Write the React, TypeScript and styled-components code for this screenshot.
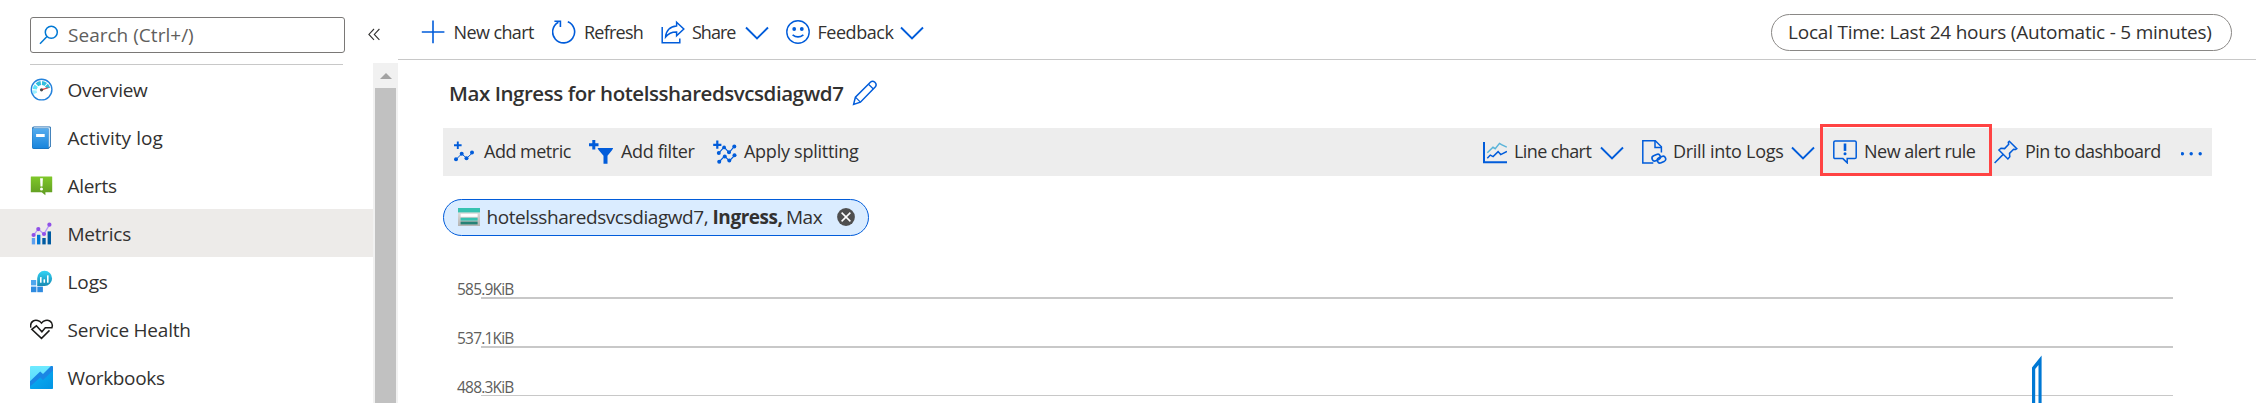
import React from 'react';
import styled, { createGlobalStyle } from 'styled-components';

const BLUE = '#015cda';

const GlobalStyle = createGlobalStyle`
  *, *::before, *::after { box-sizing: border-box; }
  html, body { margin: 0; padding: 0; background: #fff; overflow: hidden; }
  body { font-family: "Open Sans", "Noto Sans", sans-serif; color: #323130; }
  svg { display: block; flex: none; }
`;

const Page = styled.div`
  display: flex;
  width: 2256px;
  height: 403px;
  overflow: hidden;
  background: #fff;
`;

/* ---------- sidebar ---------- */

const Sidebar = styled.aside`
  width: 398px;
  flex: none;
  display: flex;
  flex-direction: column;
`;

const SearchRow = styled.div`
  height: 63px;
  flex: none;
  display: flex;
  align-items: flex-start;
  padding: 17px 0 0 30px;
`;

const SearchBox = styled.div`
  width: 315px;
  height: 36px;
  border: 1px solid #7a7876;
  border-radius: 3px;
  display: flex;
  align-items: center;
  padding: 0 0 1px 8px;
  gap: 9px;
`;

const CollapseButton = styled.div`
  margin: 11px 0 0 23px;
`;

const SidebarBody = styled.div`
  flex: 1;
  display: flex;
`;

const Menu = styled.nav`
  width: 373px;
  padding-top: 1px;
`;

const MenuDivider = styled.div`
  width: 313px;
  height: 1px;
  margin-left: 30px;
  background: #c8c8c8;
`;

const MenuItem = styled.div<{ $active?: boolean }>`
  height: 48px;
  display: flex;
  align-items: center;
  gap: 13.5px;
  padding: 2px 0 0 30px;
  background: ${p => (p.$active ? '#edebe9' : 'transparent')};
`;

const Scrollbar = styled.div`
  width: 25px;
  background: #f1f1f1;
  display: flex;
  flex-direction: column;
  align-items: center;
`;

const ScrollArrow = styled.div`
  height: 25px;
  padding-top: 10px;
`;

const ScrollThumb = styled.div`
  width: 21px;
  flex: 1;
  background: #c1c1c1;
`;

/* ---------- text ---------- */

const Text = styled.span<{ $size?: number; $track?: number; $width?: number; $weight?: number; $color?: string }>`
  flex: none;
  font-size: ${p => p.$size ?? 18}px;
  font-weight: ${p => p.$weight ?? 400};
  letter-spacing: ${p => p.$track ?? 0}px;
  line-height: 24px;
  white-space: nowrap;
  color: ${p => p.$color ?? 'inherit'};
  ${p => (p.$width ? `width: ${p.$width}px;` : '')}
`;

/* ---------- main ---------- */

const Main = styled.main`
  width: 1858px;
  display: flex;
  flex-direction: column;
`;

const TopBar = styled.header`
  height: 60px;
  flex: none;
  border-bottom: 1px solid #c8c8c8;
  display: flex;
  align-items: center;
  padding: 5px 24px 0 23px;
`;

const Command = styled.div<{ $slot?: number; $gap?: number }>`
  flex: none;
  height: 48px;
  display: flex;
  align-items: center;
  width: ${p => (p.$slot ? `${p.$slot}px` : 'auto')};
  & > svg:first-child { margin-right: ${p => p.$gap ?? 8}px; }
`;

const ToolbarCommand = styled(Command)`
  & > span { padding-bottom: 2px; }
`;

const Highlighted = styled(ToolbarCommand)`
  position: relative;
  &::after {
    content: '';
    position: absolute;
    left: -13px;
    top: -4px;
    width: 172px;
    height: 52px;
    border: 3px solid #ff4343;
  }
`;

const Spacer = styled.div`
  flex: 1;
`;

const TimePill = styled.div`
  width: 461px;
  height: 37px;
  border: 1px solid #8a8886;
  border-radius: 19px;
  display: flex;
  align-items: center;
  padding: 0 0 1px 16px;
`;

const TitleRow = styled.div`
  height: 68px;
  flex: none;
  display: flex;
  align-items: center;
  gap: 9px;
  padding: 0 0 3px 51px;
`;

const ChartToolbar = styled.div`
  width: 1769px;
  height: 48px;
  flex: none;
  margin-left: 45px;
  background: #ededed;
  display: flex;
  align-items: center;
  padding-left: 11px;
`;

const Chip = styled.div`
  width: 426px;
  height: 37px;
  flex: none;
  margin: 23px 0 0 45px;
  border: 1px solid ${BLUE};
  border-radius: 19px;
  background: #daecff;
  display: flex;
  align-items: center;
  padding: 0 0 1px 14px;
`;

const ChipResource = styled(Text)`
  margin-left: 6.5px;
`;

const Chart = styled.div`
  flex: 1;
  margin: 42px 0 0 59px;
  display: flex;
`;

const AxisLabels = styled.div`
  width: 24px;
  flex: none;
  padding-top: 1px;
`;

const AxisLabel = styled.div`
  height: 49px;
  font-size: 15.5px;
  line-height: 20px;
  letter-spacing: -0.8px;
  color: #605e5c;
  white-space: nowrap;
`;

/* ---------- icons ---------- */

const Chevron = () => (
  <svg width="24" height="24" viewBox="0 0 24 24" fill="none" stroke={BLUE} strokeWidth="1.9">
    <path d="M1 7.5 12 18.5 23 7.5" />
  </svg>
);

const SearchIcon = () => (
  <svg width="20" height="20" viewBox="0 0 20 20" fill="none" stroke="#0078d4" strokeWidth="1.5">
    <circle cx="12.3" cy="7.2" r="6" />
    <path d="M8 11.5 1 18.7" />
  </svg>
);

const CollapseIcon = () => (
  <svg width="12" height="13" viewBox="0 0 12 13" fill="none" stroke="#323130" strokeWidth="1.1">
    <path d="M6 1 .9 6.4 6 11.8M11.4 1 6.3 6.4l5.1 5.4" />
  </svg>
);

const OverviewIcon = () => (
  <svg width="24" height="24" viewBox="0 0 24 24">
    <circle cx="11.6" cy="11.6" r="10.3" fill="#fff" stroke="#2482dc" strokeWidth="1.4" />
    <g fill="none" strokeWidth="4">
      <path d="M5.2 15.4A7 7 0 0 1 4.7 12.4" stroke="#9bf0ff" />
      <path d="M4.9 11.2A7 7 0 0 1 6.2 7.8" stroke="#5ee4fb" />
      <path d="M7 6.9A7 7 0 0 1 10.8 5" stroke="#32bedd" />
      <path d="M12 4.9A7 7 0 0 1 15.7 6.5" stroke="#32bedd" />
      <path d="M16.4 7.2A7 7 0 0 1 18.2 10.3" stroke="#32bedd" />
    </g>
    <path d="m11.6 11 6.6-1.8.3.9-6.4 2.3z" fill="#e8403f" />
    <circle cx="11.5" cy="11.8" r="1.6" fill="#4a4a4a" />
  </svg>
);

const ActivityIcon = () => (
  <svg width="24" height="24" viewBox="0 0 24 24">
    <defs>
      <linearGradient id="book" x1="0" y1="0" x2="0" y2="1">
        <stop offset="0" stopColor="#55acee" />
        <stop offset="1" stopColor="#1784dc" />
      </linearGradient>
    </defs>
    <path d="M4 .4h15.6q1.2 0 1.2 1.2v19L18.5 23H3.8Q2 23 2 21V2.4Q2 .4 4 .4z" fill="#1665ab" />
    <path d="M4.2 1.2h15q.8 0 .8.8v18.3l-1.5 1.4V2.5H3.2Q3.4 1.2 4.2 1.2z" fill="#d3e8f7" />
    <path d="M2.3 2.6h16.1V22.6H3.8q-1.5 0-1.5-1.6z" fill="url(#book)" />
    <rect x="6.1" y="8" width="8.6" height="3" fill="#fff" />
  </svg>
);

const AlertsIcon = () => (
  <svg width="24" height="24" viewBox="0 0 24 24">
    <defs>
      <linearGradient id="alert" x1="0" y1="0" x2="0" y2="1">
        <stop offset="0" stopColor="#7fc829" />
        <stop offset="1" stopColor="#5f9a22" />
      </linearGradient>
    </defs>
    <path d="M1.2 2.4h20.6q.4 0 .4.4v15.1q0 .4-.4.4H15.4v3l-3.7-3H1.2q-.4 0-.4-.4V2.8q0-.4.4-.4z" fill="url(#alert)" />
    <path d="M10.1 4.3h2.8l-.4 8.2h-2z" fill="#fff" />
    <circle cx="11.5" cy="14.9" r="1.5" fill="#fff" />
  </svg>
);

const MetricsIcon = () => (
  <svg width="24" height="24" viewBox="0 0 24 24">
    <rect x="1.8" y="16" width="3.3" height="6.4" fill="#5ea0ef" />
    <rect x="7" y="12.8" width="3.4" height="9.6" fill="#0078d4" />
    <rect x="12.3" y="16" width="3.4" height="6.4" fill="#005ba1" />
    <rect x="17.6" y="9.4" width="3.4" height="13" fill="#005ba1" />
    <path d="M3.5 13.1 8.3 7.1l5.6 5L19.4 2.9" fill="none" stroke="#b796f9" strokeWidth="1.3" />
    <g fill="#9051e8">
      <circle cx="3.6" cy="13" r="2.1" />
      <circle cx="8.3" cy="7.1" r="2.1" />
      <circle cx="14" cy="12" r="2.1" />
      <circle cx="19.4" cy="2.7" r="2.1" />
    </g>
  </svg>
);

const LogsIcon = () => (
  <svg width="24" height="24" viewBox="0 0 24 24">
    <defs>
      <linearGradient id="logs" x1="0" y1="0" x2="0" y2="1">
        <stop offset="0" stopColor="#32d4f5" />
        <stop offset="1" stopColor="#198ab3" />
      </linearGradient>
    </defs>
    <rect x="1" y="10" width="5.2" height="5.4" fill="#4fa6ee" />
    <rect x="1" y="16.6" width="5.4" height="5.6" fill="#2f8be0" />
    <rect x="7.3" y="16.6" width="5.6" height="5.6" fill="#2f8be0" />
    <path d="M14.5.8a7.6 7.6 0 1 1 0 15.2H7.2V8.2A7.4 7.4 0 0 1 14.5.8z" fill="url(#logs)" />
    <g fill="#fff">
      <rect x="10" y="7" width="1.6" height="5.8" rx=".5" />
      <rect x="13.5" y="9.3" width="1.6" height="3.5" rx=".5" />
      <rect x="17" y="5.2" width="1.6" height="7.6" rx=".5" />
    </g>
  </svg>
);

const HealthIcon = () => (
  <svg width="24" height="24" viewBox="0 0 24 24" fill="none" stroke="#1b1a19" strokeWidth="1.5">
    <path d="M.8 9.6C.2 6.8 1.2 4.2 3.2 3c2.6-1.5 6.3-.6 8.3 2.1 2-2.7 5.7-3.6 8.3-2.1 2.1 1.2 3 4 2.1 6.8H15.3l-3.4 4-5.5-6-4.6 3.6 9.7 9 8-8" />
  </svg>
);

const WorkbooksIcon = () => (
  <svg width="24" height="24" viewBox="0 0 24 24">
    <defs>
      <linearGradient id="wbTop" x1="0" y1="0" x2="0" y2="1">
        <stop offset="0" stopColor="#6eeaff" />
        <stop offset="1" stopColor="#4fd5fb" />
      </linearGradient>
      <linearGradient id="wbLow" x1="0" y1="0" x2="1" y2="1">
        <stop offset="0" stopColor="#0cb2f4" />
        <stop offset="1" stopColor="#0294e4" />
      </linearGradient>
    </defs>
    <rect x="0" y="0" width="23" height="23" rx="1" fill="url(#wbTop)" />
    <path d="M0 19.5 11 9l3 2.8L23 3.5V22q0 1-1 1H1q-1 0-1-1z" fill="url(#wbLow)" />
    <path d="M0 15.3 10.2 5.6l2.8 2.5L21 0h1q1 0 1 1v3.4L13 14l-2.7-2.6L0 20.6z" fill="#1a86e4" />
  </svg>
);

const PlusIcon = () => (
  <svg width="24" height="24" viewBox="0 0 24 24" stroke={BLUE} strokeWidth="1.6">
    <path d="M.8 12h22.6M12 .6v22.6" />
  </svg>
);

const RefreshIcon = () => (
  <svg width="24" height="24" viewBox="0 0 24 24" fill="none" stroke={BLUE} strokeWidth="1.6">
    <path d="M15.8 1.7a11 11 0 1 1-9.4.5" />
    <path d="M2.4 1.3h6v5.6" />
  </svg>
);

const ShareIcon = () => (
  <svg width="24" height="24" viewBox="0 0 24 24" fill="none" stroke={BLUE} strokeWidth="1.5">
    <path d="M1.2 7v15.7h17.6v-4.2" />
    <path d="M15.6 2.2 22.8 9l-7.2 6.7V12c-4.8-.1-8.3 1.5-11 5 .3-6.2 4.4-10.8 11-11.1z" />
  </svg>
);

const SmileIcon = () => (
  <svg width="24" height="24" viewBox="0 0 24 24" fill="none" stroke={BLUE} strokeWidth="1.4">
    <circle cx="12" cy="12" r="11.2" />
    <path d="M6.6 14.8q5.4 4.2 10.8 0" strokeWidth="1.7" />
    <circle cx="8.2" cy="9" r="1.9" fill={BLUE} stroke="none" />
    <circle cx="15.8" cy="9" r="1.9" fill={BLUE} stroke="none" />
  </svg>
);

const PencilIcon = () => (
  <svg width="26" height="26" viewBox="0 0 26 26" fill="none" stroke={BLUE} strokeWidth="1.5">
    <path d="M1.6 24.4 3.4 17.2 18.6 2q2.1-1.7 4.3.3 2.2 2.2.5 4.4L8.4 22.2z" />
    <path d="M16.5 4.2 21.4 9M3.4 17.2l5 5" strokeWidth="1.2" />
  </svg>
);

const AddMetricIcon = () => (
  <svg width="24" height="24" viewBox="0 0 24 24">
    <path d="M0 5.3h7.6M3.8 1.5v7.6" stroke={BLUE} strokeWidth="1.9" />
    <path d="m2.2 19.3 5.5-5.5 5 4.5 6-5.7" fill="none" stroke={BLUE} strokeWidth="1" />
    <g fill={BLUE}>
      <circle cx="2" cy="19.2" r="2" />
      <circle cx="7.7" cy="13.7" r="2" />
      <circle cx="12.5" cy="18.2" r="2" />
      <circle cx="18" cy="12.5" r="2" />
    </g>
  </svg>
);

const AddFilterIcon = () => (
  <svg width="24" height="24" viewBox="0 0 24 24" fill={BLUE}>
    <path d="M3.3 0h3v3.2h3.2v3h-3.2v3.2h-3V6.2H0v-3h3.3z" />
    <path d="M8.5 8h15.7l-1.2 2.3-4.5 5.5v8h-4v-8L9.6 10z" />
  </svg>
);

const SplitIcon = () => (
  <svg width="24" height="24" viewBox="0 0 24 24">
    <path d="M.2 4.8h8.2M4.3.4v8.4" stroke={BLUE} strokeWidth="2.2" />
    <g fill="none" stroke={BLUE} strokeWidth="1.1">
      <path d="m5.5 13.4 5.6-6.3 5 5.6 5-6" />
      <path d="m6 22 5.6-6 4.8 5L22 15" />
    </g>
    <g fill={BLUE}>
      <circle cx="5.8" cy="13" r="2" />
      <circle cx="11.1" cy="7.4" r="1.9" />
      <circle cx="16" cy="12.3" r="2" />
      <circle cx="21.3" cy="6.6" r="2" />
      <circle cx="6.2" cy="21.7" r="2" />
      <circle cx="11.8" cy="16.4" r="2" />
      <circle cx="16.3" cy="20.6" r="2" />
      <circle cx="21.5" cy="15.3" r="2" />
    </g>
  </svg>
);

const LineChartIcon = () => (
  <svg width="24" height="24" viewBox="0 0 24 24" fill="none">
    <path d="M1 2v20.3h23" stroke={BLUE} strokeWidth="2" />
    <path d="M4.3 12.8 10 7.3l2.2 1.4 4.3-5.3 2 1.2 5.3 2.6" stroke="#59b4d9" strokeWidth="1.5" />
    <path d="m4.3 18.2 3-3.1 2.8 1.5 5-5 2.6 3 6.2-3.2" stroke={BLUE} strokeWidth="1.5" />
  </svg>
);

const DrillIcon = () => (
  <svg width="25" height="24" viewBox="0 0 25 24" fill="none" stroke={BLUE} strokeWidth="1.5">
    <path d="M11.3 23H.8V.8h12.5l6.1 6v5.6" />
    <path d="M13 .8v6.6h6.4" />
    <rect x="9.9" y="14.9" width="8.6" height="5.4" rx="2.7" transform="rotate(-24 14.2 17.6)" strokeWidth="1.6" />
    <rect x="15.2" y="16.9" width="8.6" height="5.4" rx="2.7" transform="rotate(-24 19.5 19.6)" strokeWidth="1.6" />
  </svg>
);

const AlertRuleIcon = () => (
  <svg width="24" height="24" viewBox="0 0 24 24" fill="none" stroke={BLUE} strokeWidth="1.5">
    <path d="M2.2.9h19.6q1.4 0 1.4 1.4v14.9q0 1.4-1.4 1.4H14.2v4.2l-4.3-4.2H2.2Q.8 18.6.8 17.2V2.3Q.8.9 2.2.9z" />
    <path d="M12 3.5v7.4" strokeWidth="2.6" />
    <circle cx="12" cy="13.8" r="1.5" fill={BLUE} stroke="none" />
  </svg>
);

const PinIcon = () => (
  <svg width="24" height="24" viewBox="0 0 24 24" fill="none" stroke={BLUE} strokeWidth="1.5">
    <path d="m15.3 1.2 7.5 7.4-1.2.9-2-.3-4.1 4.2.3 3.4-1.9 2.2-9-9 2.1-1.8 3.6.4 4.1-4.4-.4-2z" />
    <path d="M9.2 14.4.6 23" />
  </svg>
);

const MoreIcon = () => (
  <svg width="24" height="24" viewBox="0 0 24 24" fill={BLUE}>
    <circle cx="1.4" cy="13.7" r="1.7" />
    <circle cx="10.2" cy="13.7" r="1.7" />
    <circle cx="19.2" cy="13.7" r="1.7" />
  </svg>
);

const StorageIcon = () => (
  <svg width="22" height="18" viewBox="0 0 22 18">
    <defs>
      <linearGradient id="store" x1="0" y1="0" x2="0" y2="1">
        <stop offset="0" stopColor="#e8e8e8" />
        <stop offset="1" stopColor="#b3b3b3" />
      </linearGradient>
    </defs>
    <rect width="22" height="18" fill="url(#store)" />
    <rect width="22" height="4.4" fill="#37c2b1" />
    <rect x="2.6" y="5.8" width="17" height="3" fill="#fff" />
    <rect x="2.6" y="9.8" width="17" height="2.8" fill="#37c2b1" />
    <rect x="2.6" y="13.6" width="17" height="2.8" fill="#258277" />
  </svg>
);

const CloseIcon = () => (
  <svg width="18" height="18" viewBox="0 0 18 18">
    <circle cx="9" cy="9" r="8.9" fill="#4f4f4f" />
    <path d="m4.6 4.6 8.8 8.8M13.4 4.6l-8.8 8.8" stroke="#fff" strokeWidth="1.5" />
  </svg>
);

const menu = [
  { label: 'Overview', Icon: OverviewIcon, track: -0.3 },
  { label: 'Activity log', Icon: ActivityIcon, track: 0.05 },
  { label: 'Alerts', Icon: AlertsIcon, track: -0.3 },
  { label: 'Metrics', Icon: MetricsIcon, track: -0.25, active: true },
  { label: 'Logs', Icon: LogsIcon, track: -0.1 },
  { label: 'Service Health', Icon: HealthIcon, track: -0.22 },
  { label: 'Workbooks', Icon: WorkbooksIcon, track: -0.35 },
];

export default function App() {
  return (
    <>
      <GlobalStyle />
      <Page>
        <Sidebar>
          <SearchRow>
            <SearchBox>
              <SearchIcon />
              <Text $size={19} $track={0.02} $color="#605e5c">Search (Ctrl+/)</Text>
            </SearchBox>
            <CollapseButton><CollapseIcon /></CollapseButton>
          </SearchRow>
          <SidebarBody>
            <Menu>
              <MenuDivider />
              {menu.map(({ label, Icon, track, active }) => (
                <MenuItem key={label} $active={active}>
                  <Icon />
                  <Text $size={19} $track={track}>{label}</Text>
                </MenuItem>
              ))}
            </Menu>
            <Scrollbar>
              <ScrollArrow>
                <svg width="12" height="6" viewBox="0 0 12 6"><path d="M6 0l6 6H0z" fill="#a3a3a3" /></svg>
              </ScrollArrow>
              <ScrollThumb />
            </Scrollbar>
          </SidebarBody>
        </Sidebar>

        <Main>
          <TopBar>
            <Command $slot={131} $gap={8.5}><PlusIcon /><Text $track={-0.6}>New chart</Text></Command>
            <Command $slot={109}><RefreshIcon /><Text $track={-0.77}>Refresh</Text></Command>
            <Command $slot={125} $gap={7}><ShareIcon /><Text $track={-1} $width={53}>Share</Text><Chevron /></Command>
            <Command $gap={7.5}><SmileIcon /><Text $track={-0.46} $width={82.5}>Feedback</Text><Chevron /></Command>
            <Spacer />
            <TimePill>
              <Text $size={19} $track={-0.22}>Local Time: Last 24 hours (Automatic - 5 minutes)</Text>
            </TimePill>
          </TopBar>

          <TitleRow>
            <Text $size={20.5} $track={-0.44} $weight={600}>Max Ingress for hotelssharedsvcsdiagwd7</Text>
            <PencilIcon />
          </TitleRow>

          <ChartToolbar>
            <ToolbarCommand $slot={135} $gap={6}><AddMetricIcon /><Text $track={-0.5}>Add metric</Text></ToolbarCommand>
            <ToolbarCommand $slot={124}><AddFilterIcon /><Text $track={-0.36}>Add filter</Text></ToolbarCommand>
            <ToolbarCommand $slot={770} $gap={7}><SplitIcon /><Text $track={-0.26}>Apply splitting</Text></ToolbarCommand>
            <ToolbarCommand $slot={159} $gap={7}><LineChartIcon /><Text $track={-0.6} $width={86}>Line chart</Text><Chevron /></ToolbarCommand>
            <ToolbarCommand $slot={191} $gap={6}><DrillIcon /><Text $track={-0.29} $width={118}>Drill into Logs</Text><Chevron /></ToolbarCommand>
            <Highlighted $slot={161} $gap={7}><AlertRuleIcon /><Text $track={-0.5}>New alert rule</Text></Highlighted>
            <ToolbarCommand $slot={187} $gap={7}><PinIcon /><Text $track={-0.5}>Pin to dashboard</Text></ToolbarCommand>
            <ToolbarCommand><MoreIcon /></ToolbarCommand>
          </ChartToolbar>

          <Chip>
            <StorageIcon />
            <ChipResource $size={19} $track={-0.42} $width={226}>hotelssharedsvcsdiagwd7,</ChipResource>
            <Text $size={19} $track={-0.45} $weight={700} $width={73.5}>Ingress,</Text>
            <Text $size={19} $track={-0.5} $width={51}>Max</Text>
            <CloseIcon />
          </Chip>

          <Chart>
            <AxisLabels>
              <AxisLabel>585.9KiB</AxisLabel>
              <AxisLabel>537.1KiB</AxisLabel>
              <AxisLabel>488.3KiB</AxisLabel>
            </AxisLabels>
            <svg width="1692" height="125" viewBox="0 0 1692 125">
              <g fill="#c8c8c8">
                <rect x="0" y="19" width="1692" height="2" />
                <rect x="0" y="68" width="1692" height="2" />
                <rect x="0" y="117" width="1692" height="1" />
              </g>
              <path d="M1551 125V89.5L1560.6 77.5V125H1557.5V87L1554.2 91V125z" fill="#0078d4" />
            </svg>
          </Chart>
        </Main>
      </Page>
    </>
  );
}
